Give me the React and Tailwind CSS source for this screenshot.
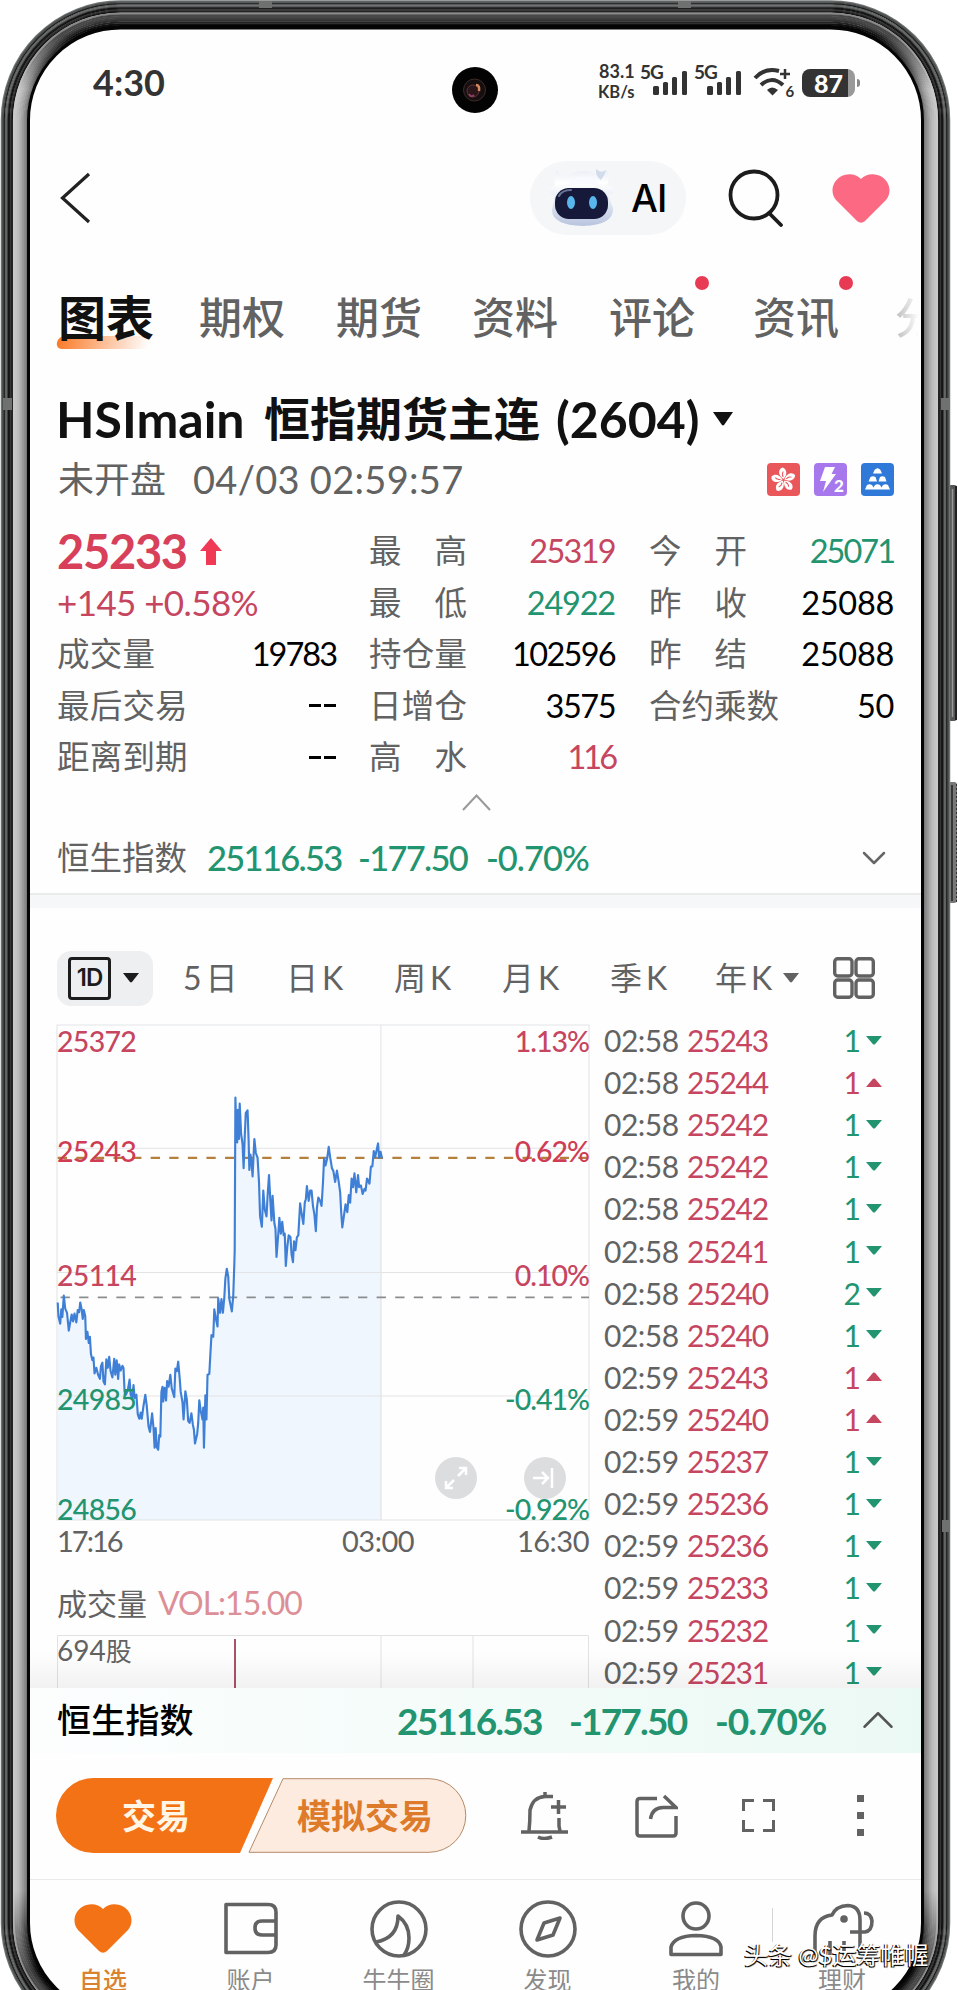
import { ChevronDown, ChevronUp } from 'lucide-react';

const RED = 'text-[#c6455f]';
const GREEN = 'text-[#22946f]';
const GRAY = 'text-[#626262]';

const tabs = [
  { label: '期权', className: 'ml-[45px]' },
  { label: '期货', className: 'ml-[51px]' },
  { label: '资料', className: 'ml-[50px]' },
  { label: '评论', className: 'ml-[51px]', dot: true },
  { label: '资讯', className: 'ml-[58px]', dot: true },
];

const quoteRows = [
  [null, ['最高', '25319', RED, 'tracking-[-1.700px]'], ['今开', '25071', GREEN, 'tracking-[-2px]']],
  [null, ['最低', '24922', GREEN, 'tracking-[-1.200px]'], ['昨收', '25088', 'text-black', 'tracking-[-0.300px]']],
  [['成交量', '19783'], ['持仓量', '102596', 'text-black', 'tracking-[-1.700px]'], ['昨结', '25088', 'text-black', 'tracking-[-0.300px]']],
  [['最后交易', '--'], ['日增仓', '3575', 'text-black', 'tracking-[-1.500px]'], ['合约乘数', '50', 'text-black', 'tracking-[-0.300px]']],
  [['距离到期', '--'], ['高水', '116', RED, 'tracking-[-3px]'], null],
];

const periods = [
  { n: '5', u: '日', className: 'ml-[30px] w-[103px]' },
  { n: '日', u: 'K', className: 'w-[108px]' },
  { n: '周', u: 'K', className: 'w-[108px]' },
  { n: '月', u: 'K', className: 'w-[108px]' },
  { n: '季', u: 'K', className: 'w-[105px]' },
  { n: '年', u: 'K', className: 'w-[68px]' },
];

const ticks = [
  ['02:58', '25243', 1, 'down'],
  ['02:58', '25244', 1, 'up'],
  ['02:58', '25242', 1, 'down'],
  ['02:58', '25242', 1, 'down'],
  ['02:58', '25242', 1, 'down'],
  ['02:58', '25241', 1, 'down'],
  ['02:58', '25240', 2, 'down'],
  ['02:58', '25240', 1, 'down'],
  ['02:59', '25243', 1, 'up'],
  ['02:59', '25240', 1, 'up'],
  ['02:59', '25237', 1, 'down'],
  ['02:59', '25236', 1, 'down'],
  ['02:59', '25236', 1, 'down'],
  ['02:59', '25233', 1, 'down'],
  ['02:59', '25232', 1, 'down'],
  ['02:59', '25231', 1, 'down'],
];

const axis = [
  ['25372', '1.13%', 'top-px', RED],
  ['25243', '0.62%', 'top-[111px]', 'text-[#cf3d55]'],
  ['25114', '0.10%', 'top-[235px]', RED],
  ['24985', '-0.41%', 'top-[359px]', GREEN],
  ['24856', '-0.92%', 'top-[469px]', GREEN],
];

const PRICE =
  '50,850 52,890 57,912 60,870 63,892 67,830 71,868 76,880 81,932 85,908 89,885 93,905 97,882 102,908 106,872 110,878 113,850 117,870 120,898 123,872 127,890 129,956 133,935 137,968 140,950 143,1000 147,1018 150,1010 153,1056 158,1040 163,1060 168,1072 171,1035 175,1025 178,1080 182,1088 186,1015 190,1040 194,1008 198,1050 203,1068 208,1014 211,1060 215,1018 219,1072 222,1030 226,1048 231,1034 234,1040 237,1108 241,1118 246,1105 251,1074 254,1118 258,1128 262,1090 265,1128 270,1118 274,1175 278,1188 282,1170 285,1188 290,1150 295,1118 299,1150 304,1210 308,1226 314,1172 318,1215 321,1272 324,1215 327,1270 331,1278 334,1235 337,1240 340,1110 343,1095 345,1138 349,1098 353,1135 356,1078 360,1095 365,1060 369,1100 376,1125 379,1042 383,1050 387,1022 391,1068 394,1110 399,1140 402,1190 407,1108 411,1130 415,1195 419,1200 424,1172 428,1205 431,1220 434,1260 440,1232 443,1200 446,1134 450,1165 455,1190 457,1155 459,1272 463,1120 466,1190 469,1060 474,1058 477,1000 480,945 485,950 488,870 492,895 497,920 499,838 504,880 508,840 512,880 516,835 519,780 523,752 527,775 530,840 534,860 537,876 541,830 544,736 545,700 547,255 549,330 552,385 554,290 557,375 559,272 563,360 567,390 570,460 573,370 576,300 581,292 584,380 586,465 589,420 592,440 595,484 600,375 604,415 609,430 613,500 616,600 621,630 625,525 629,580 634,600 637,540 641,480 645,560 648,612 651,540 656,620 659,635 662,718 667,650 670,604 674,650 678,616 682,655 685,650 688,744 692,690 696,655 701,660 704,710 708,733 711,672 715,698 719,660 723,655 728,562 732,590 737,622 741,560 744,550 747,512 752,555 756,525 760,525 764,570 768,595 772,643 775,575 779,545 784,555 788,570 792,500 795,432 799,452 804,430 808,398 812,428 817,460 821,468 826,500 831,467 836,500 840,530 843,590 846,632 851,595 855,565 860,588 864,538 868,560 872,490 876,515 880,475 885,530 890,480 893,515 898,510 903,535 908,520 911,525 915,490 922,505 926,455 930,455 934,410 938,428 941,412 946,388 949,430 953,412 957,432';

const LATIN = "font-['Lato','Noto_Sans_CJK_SC',sans-serif]";

function Triangle({ up, className = '' }) {
  return (
    <svg viewBox="0 0 16 9" preserveAspectRatio="none" className={`shrink-0 ${className}`}>
      <path d={up ? 'M0 9 7 0.800Q8 0 9 0.800L16 9Z' : 'M0 0H16L9 8.200Q8 9 7 8.200Z'} fill="currentColor" />
    </svg>
  );
}

// Metal body of the handset: thin rails outside, polished bevel, black inner lip.
function PhoneFrame() {
  const rails = ['#777b7b', '#505353', '#4a4c4c', '#161616', '#5b5d5d', '#6b6d6d', '#4c4e4e', '#161616', '#101010', '#393939', '#2a2a2a', '#101010'];
  const bevel = ['#c9c9c9', '#c4c4c4', '#bdbdbd', '#b4b4b4', '#a9a9a9', '#9c9c9c', '#8c8c8c', '#787878'];
  const dark = ['#8a8a8a', '#474747', '#484848', '#404040', '#333333', '#222222', '#101010', '#050505'];
  const ring = i => ({ x: 1.5 + i, y: 1 + i, width: 948 - 2 * i, height: 2041 - 2 * i, rx: 119 - i });
  return (
    <svg width="958" height="1990" viewBox="0 0 958 1990" className="pointer-events-none absolute inset-0 z-10">
      <defs>
        {bevel.map((c, i) => (
          <linearGradient key={c} id={`bevel${i}`} gradientUnits="userSpaceOnUse" x1="0" x2="0" y1="0" y2="1990">
            <stop offset="0.012" stopColor={dark[i]} />
            <stop offset="0.018" stopColor={dark[i]} />
            <stop offset="0.045" stopColor={c} />
            <stop offset="0.7" stopColor={c} />
            <stop offset="0.95" stopColor={c} />
            <stop offset="0.99" stopColor={dark[i]} />
          </linearGradient>
        ))}
      </defs>
      <g>
        <rect x="948" y="485" width="9" height="236" rx="3" fill="#555" />
        <path d="M952.500 489V717" stroke="#999" strokeWidth="1.500" />
        <path d="M956 486V720" stroke="#222" strokeWidth="2" />
        <rect x="948" y="782" width="9" height="121" rx="3" fill="#777" />
        <path d="M952 785V901" stroke="#222" strokeWidth="1.500" />
        <path d="M956.500 784V902" stroke="#333" strokeWidth="1" strokeDasharray="2 2" />
      </g>
      <g fill="none">
        {rails.map((c, i) => <rect key={i} {...ring(i)} stroke={c} strokeWidth="1.500" />)}
        {bevel.map((c, i) => <rect key={c} {...ring(12.5 + i * 1.8)} stroke={`url(#bevel${i})`} strokeWidth="2.200" />)}
        <rect {...ring(27)} stroke="#050505" strokeWidth="3" />
      </g>
      <g fill="#6f7171">
        <rect x="259" y="1" width="13" height="7" />
        <rect x="678" y="1" width="13" height="7" />
        <rect x="3" y="398" width="9" height="12" />
        <rect x="941" y="398" width="9" height="12" />
        <rect x="942" y="1520" width="8" height="12" />
      </g>
    </svg>
  );
}

function Signal() {
  return (
    <svg width="34" height="24" viewBox="0 0 34 24" fill="#333">
      <rect x="0" y="15" width="6" height="9" rx="1.500" />
      <rect x="10" y="11" width="5" height="13" rx="1.500" />
      <rect x="19" y="6" width="5" height="18" rx="1.500" />
      <rect x="29" y="0" width="5" height="24" rx="1.500" />
    </svg>
  );
}

function StatusBar() {
  return (
    <div className="flex h-[106px] items-center text-[#333]">
      <span className="ml-[63px] w-[359px] -mt-[2px] text-[36px] leading-none font-bold">4:30</span>
      <svg width="46" height="46" viewBox="0 0 46 46" className="mt-[14px] shrink-0">
        <circle cx="23" cy="23" r="23" fill="#030303" />
        <circle cx="22.500" cy="23" r="11" fill="#160f10" stroke="#3f2b28" strokeWidth="1" />
        <circle cx="21" cy="24" r="6" fill="#2a1519" stroke="#5c343c" strokeWidth="1" />
        <path d="M24 18Q28 18 27 24" stroke="#d88a5e" strokeWidth="2.500" fill="none" />
        <path d="M17 27Q19 31 22 28" stroke="#8c3f5c" strokeWidth="2" fill="none" />
      </svg>
      <div className="-mt-[3px] ml-[100px] flex h-[35px] w-[42px] flex-col justify-between text-[18px] leading-[15px] font-bold">
        <span className="pl-px">83.1</span>
        <span className="text-[16.500px] leading-[14px]">KB/s</span>
      </div>
      <span className="-mt-[24px] w-[13px] text-[19px] leading-none font-bold tracking-[-1px]">5G</span>
      <Signal />
      <span className="-mt-[24px] ml-[7px] w-[13px] text-[19px] leading-none font-bold tracking-[-1px]">5G</span>
      <Signal />
      <svg width="42" height="32" viewBox="0 0 42 32" className="ml-[12px]">
        <g fill="none" stroke="#333" strokeWidth="4">
          <path d="M2 11Q12 0 26 4" />
          <path d="M8 18Q19 8 30 18" />
          <path d="M27 7H37M32 2V12" strokeWidth="2.500" />
        </g>
        <path d="M14 23Q19 18 25 23L19.500 28.500Z" fill="#333" />
        <text x="32.500" y="30" fontSize="15" fontWeight="700" fill="#333" fontFamily="Lato">6</text>
      </svg>
      <span className="ml-[7px] flex h-[28px] w-[53px] items-center justify-center rounded-[8px] bg-[linear-gradient(90deg,#333_86%,#999_86%)] text-[25px] leading-none font-black text-white">87</span>
      <span className="ml-[2px] h-[8px] w-[3px] rounded-r-full bg-[#888]" />
    </div>
  );
}

function Robot() {
  return (
    <svg width="68" height="60" viewBox="0 0 68 60">
      <defs>
        <linearGradient id="shell" x1="0" x2="0" y1="0" y2="1">
          <stop offset="0" stopColor="#e9edf5" />
          <stop offset="0.250" stopColor="#ffffff" />
          <stop offset="0.600" stopColor="#dfe5f2" />
          <stop offset="1" stopColor="#b9c4de" />
        </linearGradient>
      </defs>
      <path d="M8 17Q6 8 10 2Q13 9 19 9Q27 2 37 3Q46 3 51 8Q57 7 59 1Q64 9 60 17L68 22Q66 27 61 27L66 40Q67 57 36 58Q5 57 5 42L8 27Q3 27 1 22Z" fill="url(#shell)" />
      <path d="M20 19Q24 9 36 9Q50 9 53 19Q36 13 20 19Z" fill="#f8faff" />
      <path d="M49 1Q48 8 54 12Q58 7 59 2Q54 6 49 1Z" fill="#d2dbea" />
      <rect x="8" y="20" width="53" height="31" rx="14" fill="#17193a" />
      <path d="M12 28Q15 22 24 22" stroke="#697495" strokeWidth="2" fill="none" strokeLinecap="round" />
      <ellipse cx="24" cy="34.500" rx="4" ry="6.500" fill="#58b6ec" />
      <ellipse cx="46" cy="34.500" rx="4" ry="6.500" fill="#58b6ec" />
    </svg>
  );
}

function Heart({ className }) {
  return (
    <svg viewBox="0 0 58 49" width="58" height="49" className={className}>
      <path d="M29 5C34-1 44-1 50 3C58 8 60 19 54 26L33 47Q29 50.500 25 47L4 26C-2 19 0 8 8 3C14-1 24-1 29 5Z" fill="currentColor" />
    </svg>
  );
}

function Header() {
  return (
    <div className="flex h-[124px] items-center">
      <svg width="31" height="52" viewBox="0 0 31 52" className="ml-[30px]" fill="none" stroke="#222" strokeWidth="3.200">
        <path d="M29 2 2.500 26 29 50" />
      </svg>
      <div className="ml-[439px] flex h-[74px] w-[156px] items-center rounded-full bg-[#f5f6f8]">
        <span className="ml-[17px]"><Robot /></span>
        <span className="ml-[16px] font-['Inter'] text-[38px] leading-none font-medium tracking-[-1px] text-black">AI</span>
      </div>
      <svg width="56" height="58" viewBox="0 0 56 58" className="ml-[42px]" fill="none" stroke="#1c1c1c" strokeWidth="3.800">
        <circle cx="26" cy="26" r="23.500" />
        <path d="M41 44 53 56" strokeLinecap="round" />
      </svg>
      <Heart className="ml-[48px] text-[#fb6a82]" />
    </div>
  );
}

function Tabs() {
  return (
    <div className="flex h-[115px] items-center text-[43px] leading-none font-medium">
      <span className="relative ml-[28px] text-[48px] font-bold text-[#111]">
        <span className="absolute -bottom-[7px] -left-[1px] h-[13px] w-[92px] rounded-l-md bg-linear-to-r from-[#fa7a28] to-[#fa7a28]/0 -skew-x-12" />
        <span className="relative">图表</span>
      </span>
      {tabs.map(tab => (
        <span key={tab.label} className={`relative whitespace-nowrap ${GRAY} ${tab.className}`}>
          {tab.label}
          {tab.dot && <i className="absolute -top-[20px] -right-[14px] size-[14px] rounded-full bg-[#e83a55]" />}
        </span>
      ))}
      <span className="ml-[56px] w-[24px] shrink-0 overflow-hidden bg-linear-to-r from-[#bbb] to-white bg-clip-text whitespace-nowrap text-transparent">分</span>
    </div>
  );
}

function Badges() {
  return (
    <div className="ml-auto mr-[28px] flex gap-[14px]">
      <svg width="33" height="33" viewBox="0 0 33 33">
        <rect width="33" height="33" rx="4" fill="#e9575b" />
        {[0, 72, 144, 216, 288].map(a => (
          <g key={a} transform={`rotate(${a - 5} 16.500 17)`}>
            <path d="M16.500 16C11 12 12 5 17 4.500C21 7 21 12 16.500 16Z" fill="#fff" />
            <path d="M16.500 14Q15 11 17 8.500" stroke="#e9575b" strokeWidth="1" fill="none" />
          </g>
        ))}
      </svg>
      <svg width="33" height="33" viewBox="0 0 33 33">
        <rect width="33" height="33" rx="4" fill="#a678ec" />
        <path d="M11 4H21L17.500 11H22L9 29L12 18H6Z" fill="#fff" />
        <text x="20" y="28.500" fontSize="17" fontWeight="900" fill="#fff" fontFamily="Lato">2</text>
      </svg>
      <svg width="33" height="33" viewBox="0 0 33 33" fill="#fff">
        <rect width="33" height="33" rx="4" fill="#2f7ad8" />
        <path d="M12 10.500 13.500 7Q16.500 3.500 19.500 7L21 10.500ZM7.500 18.500 9.500 14Q12 12.500 14.500 14L16 18.500ZM17.500 18.500 19 14Q21.500 12.500 24 14L25.500 18.500ZM4 26.500 6 22Q8.500 20.500 11 22L12.500 24.500 14 22Q16.500 20.500 19 22L20.500 24.500 22 22Q24.500 20.500 27 22L29 26.500Z" />
      </svg>
    </div>
  );
}

function Label({ text, className }) {
  return (
    <span className={`flex ${text.length < 4 ? 'justify-between' : ''} ${GRAY} ${className}`}>
      {text.split('').map((ch, i) => <span key={i}>{ch}</span>)}
    </span>
  );
}

function Quote() {
  return (
    <div className="mt-[30px] text-[32.500px] leading-none">
      {quoteRows.map(([first, second, third], i) => (
        <div key={i} className="flex h-[51.400px] items-center whitespace-nowrap">
          <div className="ml-[27px] w-[312px]">
            {i === 0 && (
              <div className="flex items-center text-[#d8405a]">
                <span className="text-[47px] leading-none font-bold tracking-[-1.300px]">25233</span>
                <svg width="22" height="27" viewBox="0 0 22 27" className="ml-[13px]"><path d="M11 0 22 13H16V27H6V13H0Z" fill="#f03a55" /></svg>
              </div>
            )}
            {i === 1 && <span className={`text-[35px] tracking-[-0.600px] ${RED}`}>+145 +0.58%</span>}
            {first && (
              <div className="flex w-[279px] justify-between">
                <span className={`tracking-[0.200px] ${GRAY}`}>{first[0]}</span>
                {first[1] === '--'
                  ? <span className="flex items-center gap-[3px]"><i className="h-[3px] w-[12px] bg-black" /><i className="h-[3px] w-[12px] bg-black" /></span>
                  : <span className="tracking-[-2px] text-black">{first[1]}</span>}
              </div>
            )}
          </div>
          <Label text={second[0]} className="w-[98px]" />
          <span className={`w-[148px] text-right ${second[2]} ${second[3]}`}>{second[1]}</span>
          {third && (
            <>
              <Label text={third[0]} className={third[0].length < 4 ? 'ml-[34px] w-[98px]' : 'ml-[34px] w-[130px]'} />
              <span className={`ml-auto mr-[28px] ${third[2]} ${third[3]}`}>{third[1]}</span>
            </>
          )}
        </div>
      ))}
    </div>
  );
}

function Periods() {
  return (
    <div className={`mt-[43px] flex h-[55px] items-center text-[32px] leading-none ${GRAY}`}>
      <div className="ml-[27px] flex h-[55px] w-[96px] items-center rounded-[14px] bg-[#edeff1] text-[#1c1c1c]">
        <span className="ml-[11px] flex size-[43px] items-center justify-center rounded-[4px] border-[3px] border-current font-['Inter'] text-[24px] font-semibold tracking-[-1px]">1D</span>
        <Triangle className="ml-[12px] h-[10px] w-[16px]" />
      </div>
      {periods.map(p => (
        <span key={p.n} className={`flex gap-[4px] ${p.className}`}><span>{p.n}</span><span>{p.u}</span></span>
      ))}
      <Triangle className="h-[10px] w-[16px]" />
      <svg width="42" height="42" viewBox="0 0 42 42" className="ml-[34px]" fill="none" stroke="#626262" strokeWidth="3.400">
        <rect x="1.700" y="1.700" width="17.300" height="17.300" rx="3" />
        <rect x="23" y="1.700" width="17.300" height="17.300" rx="3" />
        <rect x="1.700" y="23" width="17.300" height="17.300" rx="3" />
        <rect x="23" y="23" width="17.300" height="17.300" rx="3" />
      </svg>
    </div>
  );
}

function PriceChart() {
  return (
    <div className="relative h-[495px]">
      <svg width="532" height="495" viewBox="48 44 1488 1438" preserveAspectRatio="none" className="overflow-visible">
        <polygon points={`50,1482 ${PRICE} 957,1482`} fill="#eff6fe" />
        <g stroke="#e3e4e6" strokeWidth="3" fill="none">
          <rect x="48" y="44" width="1488" height="1438" />
          <path d="M48 402H1536M48 763H1536M48 1122H1536M954 44V1482" />
        </g>
        <path d="M48 835H1536" stroke="#8a8d90" strokeWidth="5" strokeDasharray="26 26" strokeDashoffset="-10" />
        <path d="M48 430H1536" stroke="#b4803c" strokeWidth="6" strokeDasharray="26 26" strokeDashoffset="-2" />
        <polyline points={PRICE} fill="none" stroke="#3f80d6" strokeWidth="6" strokeLinejoin="round" />
      </svg>
      {axis.map(([price, pct, top, color]) => (
        <div key={price} className={`absolute inset-x-0 flex justify-between text-[28.500px] leading-[31px] font-medium ${top} ${color}`}>
          <span className="tracking-[-0.700px]">{price}</span>
          <span className="tracking-[-1px]">{pct}</span>
        </div>
      ))}
      <div className="absolute right-[23px] bottom-[21px] flex gap-[47px]">
        <svg width="42" height="42" viewBox="0 0 42 42" fill="none" stroke="#fff" strokeWidth="2.500">
          <circle cx="21" cy="21" r="21" fill="#dcdddf" stroke="none" />
          <path d="M23 19 31 11M24 11H31V18M19 23 11 31M11 24V31H18" />
        </svg>
        <svg width="42" height="42" viewBox="0 0 42 42" fill="none" stroke="#fff" strokeWidth="2.500">
          <circle cx="21" cy="21" r="21" fill="#dcdddf" stroke="none" />
          <path d="M9 21H23M18 15 24 21 18 27M28 11V31" />
        </svg>
      </div>
    </div>
  );
}

function VolumeChart() {
  return (
    <div className={`relative h-[53px] text-[28px] leading-none ${GRAY}`}>
      <svg width="532" height="53" className="absolute inset-0">
        <path d="M0.500 53V0.500H531.500V53M324 0V53M416 0V53" stroke="#e1e2e4" fill="none" />
        <path d="M178 4V53" stroke="#a85367" strokeWidth="2" />
      </svg>
      <span className="relative top-px">694<span className="text-[26px]">股</span></span>
    </div>
  );
}

function Ticks() {
  return (
    <div className="-mt-[6px] ml-[15px] w-[278px] text-[30px] leading-none">
      {ticks.map(([time, price, count, dir], i) => (
        <div key={i} className="flex h-[42.120px] items-center">
          <span className={`w-[83px] tracking-[-0.500px] ${GRAY}`}>{time}</span>
          <span className={`tracking-[-1.200px] ${RED}`}>{price}</span>
          <span className={`ml-auto flex items-center gap-[5px] ${dir === 'up' ? RED : GREEN}`}>
            {count}
            <Triangle up={dir === 'up'} className="h-[9px] w-[16px]" />
          </span>
        </div>
      ))}
    </div>
  );
}

function ActionBar() {
  return (
    <div className="flex h-[126px] items-center">
      <div className="relative ml-[26px] h-[75px] w-[411px]">
        <svg width="411" height="75" className="absolute inset-0">
          <path d="M37.500 0H217L184 75H37.500A37.500 37.500 0 0 1 37.500 0Z" fill="#f47216" />
          <path d="M227 0.700H373A36.800 36.800 0 0 1 373 74.300H193Z" fill="#fdebdf" stroke="#b58a68" strokeWidth="1" />
        </svg>
        <div className="relative flex h-full items-center text-[34px] leading-none font-bold">
          <span className="ml-[66px] text-[#fff6e6]">交易</span>
          <span className="ml-[107px] text-[#dd7b2b]">模拟交易</span>
        </div>
      </div>
      <svg width="48" height="48" viewBox="0 0 48 48" className="ml-[54px]" fill="none" stroke="#626262" strokeWidth="3.500">
        <path d="M0 40H47M8 39Q9 30 9 18Q12 5 24 4.500H32M24 0V5M38 26V34L39 39M30 15H45M37.500 8V22M17 45Q23 48 31 45" />
      </svg>
      <svg width="43" height="44" viewBox="0 0 43 44" className="ml-[66px]" fill="none" stroke="#626262" strokeWidth="3.500">
        <path d="M22 4.500H5Q2 4.500 2 7.500V39Q2 42 5 42H38Q41 42 41 39V22M29 2 41 13.500H28Q17 14 15.500 25" />
      </svg>
      <svg width="33" height="33" viewBox="0 0 33 33" className="ml-[64px]" fill="none" stroke="#626262" strokeWidth="3">
        <path d="M1.500 12V1.500H12M21 1.500H31.500V12M1.500 21V31.500H12M21 31.500H31.500V21" />
      </svg>
      <div className="ml-[82px] flex flex-col gap-[10px]">
        <i className="size-[7px] bg-[#626262]" />
        <i className="size-[7px] bg-[#626262]" />
        <i className="size-[7px] bg-[#626262]" />
      </div>
    </div>
  );
}

const navItems = [
  { label: '自选', className: 'ml-[14px] w-[118px]', active: true },
  {
    label: '账户',
    className: 'w-[177px]',
    icon: <path d="M3 3.500H45Q53 3.500 53 11V44Q53 51.500 45 51.500H3ZM53 20H39Q32 20 32 27Q32 34 39 34H53" />,
  },
  {
    label: '牛牛圈',
    className: 'w-[119px]',
    icon: (
      <>
        <circle cx="28" cy="28" r="27" />
        <path d="M5 41Q27 37 27 15Q38 23 38 37Q38 47 33 54" />
      </>
    ),
  },
  {
    label: '发现',
    className: 'w-[179px]',
    icon: (
      <>
        <circle cx="28" cy="28" r="27" />
        <path d="M17 39 24 22 40 17 33 34Z" />
      </>
    ),
  },
  {
    label: '我的',
    className: 'ml-px w-[116px]',
    icon: (
      <>
        <circle cx="28" cy="15" r="13" />
        <path d="M3 53.500V46Q6 35 28 34.500Q51 35 53 46V53.500Z" />
      </>
    ),
  },
  {
    label: '理财',
    className: 'ml-[28px] w-[120px]',
    icon: (
      <>
        <path d="M1 54V35Q1 16 18 14Q22 5 34 4.500Q46 5 46 19V54M16 40V54M30 40V54M36 31H51Q58 30 58 20Q57 12 50 12" />
        <circle cx="30" cy="18" r="2" fill="#626262" />
      </>
    ),
  },
];

function BottomNav() {
  return (
    <nav className="flex h-[134px] border-t border-[#e9eaeb] pt-[20px]">
      {navItems.map(item => (
        <div key={item.label} className={`flex shrink-0 flex-col items-center ${item.className}`}>
          {item.active ? (
            <Heart className="my-[4px] text-[#f47216]" />
          ) : (
            <svg width="58" height="57" viewBox="-1 -1 58 57" className="overflow-visible" fill="none" stroke="#626262" strokeWidth="3.600" strokeLinejoin="round">
              {item.icon}
            </svg>
          )}
          <span className={`mt-[11px] text-[24px] leading-none ${item.active ? 'font-medium text-[#d9822f]' : 'text-[#8a8a8a]'}`}>{item.label}</span>
        </div>
      ))}
    </nav>
  );
}

export default function App() {
  return (
    <div className={`relative h-[1990px] w-[958px] overflow-hidden bg-white ${LATIN}`}>
      <main className="mt-[30px] ml-[30px] h-[1983px] w-[892px] overflow-hidden rounded-[90px] bg-[#fefefe]">
        <StatusBar />
        <Header />
        <Tabs />

        <div className="flex h-[87px] items-center text-[46px] leading-none font-bold whitespace-nowrap text-[#111]">
          <span className="ml-[26px] w-[208px] text-[50px]">HSImain</span>
          <span>恒指期货主连</span>
          <span className="ml-[16px] text-[50px]">(2604)</span>
          <Triangle className="ml-[14px] h-[14px] w-[20px]" />
        </div>
        <div className={`flex h-[34px] items-center text-[36px] leading-none ${GRAY}`}>
          <span className="ml-[28px] w-[135px]">未开盘</span>
          <span className="text-[38px] tracking-[0.300px]">04/03 02:59:57</span>
          <Badges />
        </div>

        <Quote />

        <div className="flex h-[40px] items-center justify-center">
          <svg width="29" height="17" viewBox="0 0 29 17" fill="none" stroke="#999" strokeWidth="2"><path d="M1 16 14.500 1.500 28 16" /></svg>
        </div>
        <div className={`flex h-[70px] items-center text-[34.500px] leading-none font-medium tracking-[-1.700px] whitespace-nowrap ${GREEN}`}>
          <span className={`ml-[27px] w-[150px] text-[32.500px] font-normal tracking-normal ${GRAY}`}>恒生指数</span>
          <span className="w-[151px]">25116.53</span>
          <span className="w-[128px]">-177.50</span>
          <span className="tracking-[-1px]">-0.70%</span>
          <ChevronDown className="mr-[28px] ml-auto size-[40px] text-[#666]" strokeWidth={1.5} />
        </div>
        <div className="h-[15px] border-t-2 border-[#eaecec] bg-[#f5f7f8]" />

        <Periods />

        <section className="mt-[19px] flex h-[663px]">
          <div className="ml-[27px] w-[532px]">
            <PriceChart />
            <div className={`flex h-[42px] items-center text-[29px] leading-none tracking-[-0.500px] ${GRAY}`}>
              <span className="w-[285px] tracking-[-2px]">17:16</span>
              <span>03:00</span>
              <span className="ml-auto">16:30</span>
            </div>
            <div className="flex h-[73px] items-center gap-[11px] pt-[10px] text-[30px] leading-none">
              <span className={GRAY}>成交量</span>
              <span className="text-[32px] tracking-[-1px] text-[#dc8f96]">VOL:15.00</span>
            </div>
            <VolumeChart />
          </div>
          <Ticks />
        </section>

        <div className={`relative flex h-[65px] items-center bg-linear-to-r from-[#fcfefe] to-[#ebf9f4] text-[37px] leading-none font-bold tracking-[-1.800px] whitespace-nowrap ${GREEN}`}>
          <div className="absolute inset-x-0 -top-[36px] h-[36px] bg-linear-to-b from-black/0 to-black/5" />
          <span className="ml-[27px] w-[340px] text-[34px] font-medium tracking-[0.200px] text-black">恒生指数</span>
          <span className="w-[172px]">25116.53</span>
          <span className="w-[146px]">-177.50</span>
          <span className="tracking-[-1px]">-0.70%</span>
          <ChevronUp className="mr-[17px] ml-auto size-[54px] text-[#555]" strokeWidth={1.1} />
        </div>

        <ActionBar />
        <BottomNav />
      </main>
      <PhoneFrame />
      <i className="absolute top-[1908px] left-[772px] h-[34px] w-px bg-[#d5d5d5]" />
      <span className="absolute top-[1943px] left-[744px] z-20 text-[24px] leading-none whitespace-nowrap text-white [text-shadow:-1px_1px_0_#000,1px_1px_1px_#000]">头条 @$运筹帷幄</span>
    </div>
  );
}
